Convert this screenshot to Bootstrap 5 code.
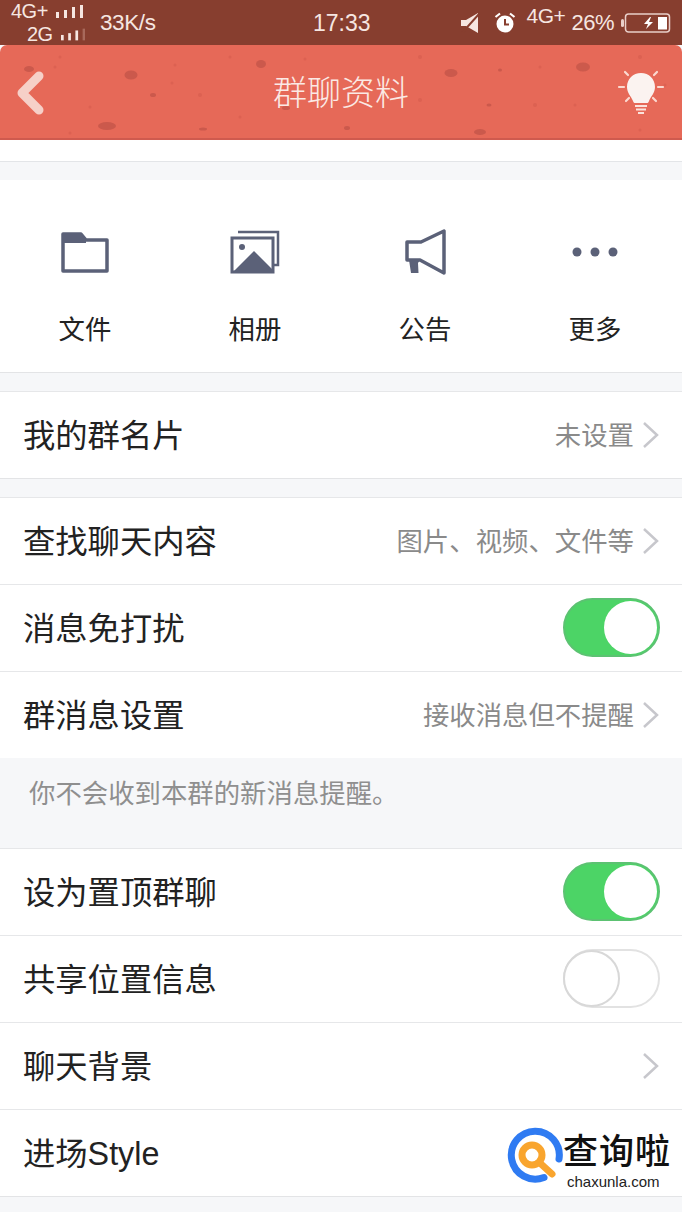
<!DOCTYPE html>
<html lang="zh-CN">
<head>
    <meta charset="UTF-8">
    <meta name="viewport" content="width=device-width, initial-scale=1.0">
    <title>群聊资料</title>
    <link href="https://cdn.jsdelivr.net/npm/bootstrap@5.3.3/dist/css/bootstrap.min.css" rel="stylesheet">
    <style>
        html, body { height: 100%; }
        body {
            width: 682px;
            height: 1212px;
            overflow: hidden;
            background: #f6f7f9;
            font-family: "Liberation Sans", "Noto Sans CJK SC", sans-serif;
            color: #222;
        }
        .status-bar {
            height: 45px;
            background: #873e2f;
            color: #f6e6e1;
            overflow: hidden;
        }
        .net-col { width: 74px; margin-left: 11px; line-height: 17px; font-size: 20px; letter-spacing: -.5px; }
        .net-line { height: 19px; }
        .net-speed { font-size: 22.500px; width: 60px; margin-left: 15px; letter-spacing: -.4px; }
        .clock { font-size: 23px; left: 313px; top: 9px; line-height: 28px; }
        .status-right { margin-right: 11px; font-size: 22px; }
        .status-mute { margin-right: 15px; }
        .status-alarm { margin-right: 10px; }
        .status-net { font-size: 21px; line-height: 20px; margin-bottom: 14px; margin-right: 6px; letter-spacing: -.4px; }
        .status-pct { letter-spacing: -.5px; margin-right: 7px; }
        .head-bar {
            height: 95px;
            background: #e66958;
            border-top-left-radius: 7px;
            border-top-right-radius: 7px;
            border-bottom: 2px solid #cf5a4e;
            color: #fbe9e5;
            overflow: hidden;
        }
        .head-spots { left: 0; top: 0; }
        .head-title { font-size: 34px; font-weight: 300; line-height: 1; margin-top: 3px; }
        .head-back { left: 15px; top: 25px; }
        .head-bulb { right: 17px; top: 25px; }
        .band-white { height: 22px; background: #fff; border-bottom: 1px solid #e3e5e8; }
        .gap-band { height: 18px; }
        .tool-grid { height: 193px; background: #fff; border-bottom: 1px solid #e3e4e6; }
        .tool-cell { width: 170px; }
        .tool-icon { height: 52px; margin-top: 46px; }
        .tool-label { font-size: 26.400px; line-height: 1; margin-top: 39px; color: #222; }
        .set-group { background: #fff; border-top: 1px solid #e6e7e9; }
        .set-group.is-last { border-bottom: 1px solid #e3e4e6; }
        .set-row {
            height: 87px;
            padding: 0 22px 0 23px;
            border-bottom: 1px solid #e6e7e9;
            font-size: 32.300px;
        }
        .set-row > span { padding-top: 3px; }
        .set-row:last-child { border-bottom: 0; height: 86px; }
        .set-value { font-size: 26.400px; color: #8a8a8a; }
        .row-arrow { margin-left: 8px; }
        .switch-pill {
            width: 97px;
            height: 59px;
            border-radius: 30px;
            background: #4cd466;
            border: 2px solid #5cc272;
            padding: 1px;
            margin-bottom: 2px;
        }
        .switch-pill.is-off {
            background: #fff;
            border-color: #e2e2e2;
            padding: 0;
        }
        .switch-knob {
            width: 53px;
            height: 53px;
            border-radius: 50%;
            background: #fff;
        }
        .switch-pill.is-off .switch-knob {
            width: 57px;
            height: 57px;
            margin: -1px 0 0 -2px;
            border: 2px solid #d8d8d8;
            flex: none;
        }
        .note-band {
            height: 90px;
            padding: 21px 0 0 29px;
            font-size: 26.400px;
            line-height: 30px;
            color: #8f8f8f;
        }
        .brand-logo { left: 504px; top: 1126px; }
        .brand-block { left: 563px; top: 1132px; }
        .brand-name { font-family: "Liberation Serif", "Noto Sans CJK SC", serif; font-size: 35px; font-weight: 500; line-height: 41px; color: #111; letter-spacing: 1px; }
        .brand-url { font-size: 15px; line-height: 17px; color: #222; margin-left: 4px; }
    </style>
</head>

<body class="position-relative">
    <!-- status bar -->
    <div class="status-bar d-flex align-items-center position-relative">
        <div class="net-col">
            <div class="net-line d-flex align-items-center">
                <span>4G+</span>
                <svg class="ms-2" width="27" height="13" viewBox="0 0 27 13"><g fill="#f6e6e1"><rect x="0" y="7" width="3" height="6"/><rect x="8" y="5" width="3" height="8"/><rect x="16" y="2" width="3" height="11"/><rect x="24" y="0" width="3" height="13"/></g></svg>
            </div>
            <div class="net-line d-flex align-items-center mt-1 ps-3">
                <span>2G</span>
                <svg class="ms-2" width="27" height="13" viewBox="0 0 27 13"><g fill="#f6e6e1"><rect x="0" y="7" width="3" height="6"/><rect x="8" y="5" width="3" height="8"/><rect x="16" y="2" width="3" height="11"/></g><rect x="24" y="0" width="3" height="13" fill="#a8695b"/></svg>
            </div>
        </div>
        <div class="net-speed">33K/s</div>
        <div class="clock position-absolute">17:33</div>
        <div class="status-right ms-auto d-flex align-items-center">
            <svg class="status-mute" width="18" height="20" viewBox="0 0 18 20"><path d="M0 7h5l12-7v20L5 13H0z" fill="#f6e6e1"/><path d="M1 20L18 1" stroke="#873e2f" stroke-width="2"/></svg>
            <svg class="status-alarm" width="22" height="22" viewBox="0 0 22 22"><circle cx="11" cy="12" r="8.500" fill="#fff"/><path d="M11 7v5.500h4" fill="none" stroke="#873e2f" stroke-width="2"/><path d="M1.500 5L6 1.500M20.500 5L16 1.500" stroke="#fff" stroke-width="2.200"/></svg>
            <span class="status-net">4G+</span>
            <span class="status-pct">26%</span>
            <svg width="50" height="20" viewBox="0 0 50 20"><rect x="0" y="6" width="3" height="8" rx="1.500" fill="#e9cfc9"/><rect x="4.500" y="1" width="44" height="18" rx="3" fill="none" stroke="#e9cfc9" stroke-width="1.500"/><path d="M29 4l-6 7h4l-2 5 7-7h-4l2-5z" fill="#fff"/><rect x="37" y="4" width="9" height="12.500" fill="#fff"/></svg>
        </div>
    </div>

    <!-- title bar -->
    <div class="head-bar position-relative d-flex align-items-center justify-content-center">
        <svg class="head-spots position-absolute" width="682" height="95" viewBox="0 0 682 95">
            <g fill="#c5564a" opacity=".8">
                <ellipse cx="29" cy="24" rx="5" ry="3"/><ellipse cx="131" cy="30" rx="6.500" ry="4.500"/>
                <ellipse cx="153" cy="50" rx="3" ry="2"/><ellipse cx="107" cy="81" rx="9" ry="4"/>
                <ellipse cx="203" cy="84" rx="4" ry="1.500"/><ellipse cx="261" cy="19" rx="5" ry="4"/>
                <ellipse cx="286" cy="63" rx="4" ry="2"/><ellipse cx="347" cy="83" rx="3" ry="2"/>
                <ellipse cx="451" cy="28" rx="6.500" ry="4"/><ellipse cx="500" cy="25" rx="2" ry="1.500"/>
                <ellipse cx="489" cy="60" rx="2.500" ry="1.500"/><ellipse cx="583" cy="22" rx="7" ry="4.500"/>
                <ellipse cx="480" cy="87" rx="6" ry="3"/>
            </g>
            <g fill="#d85f50" opacity=".7">
                <circle cx="60" cy="12" r="1.500"/><circle cx="55" cy="22" r="1.500"/><circle cx="90" cy="62" r="1.500"/>
                <circle cx="175" cy="20" r="1.500"/><circle cx="172" cy="38" r="1.500"/><circle cx="200" cy="50" r="2"/>
                <circle cx="230" cy="12" r="1.500"/><circle cx="240" cy="72" r="1.500"/><circle cx="305" cy="14" r="1.500"/>
                <circle cx="420" cy="12" r="2"/><circle cx="420" cy="55" r="2"/><circle cx="540" cy="22" r="1.500"/>
                <circle cx="535" cy="60" r="2"/><circle cx="575" cy="60" r="1.500"/><circle cx="640" cy="12" r="2"/>
                <circle cx="665" cy="40" r="1.500"/><circle cx="640" cy="85" r="1.500"/><circle cx="70" cy="88" r="1.500"/>
            </g>
        </svg>
        <svg class="head-back position-absolute" width="30" height="46" viewBox="0 0 30 46"><path d="M24 6L7 23l17 17" fill="none" stroke="#f6d0c8" stroke-width="9" stroke-linecap="round" stroke-linejoin="round"/></svg>
        <div class="head-title position-relative">群聊资料</div>
        <svg class="head-bulb position-absolute" width="48" height="46" viewBox="0 0 48 46">
            <path d="M24 3c-8 0-14 6-14 14 0 6 4 9 6 14 .5 1.500 1 2 2 2h12c1 0 1.500-.5 2-2 2-5 6-8 6-14 0-8-6-14-14-14z" fill="#fbf3f0"/>
            <path d="M18 36h12M19 39.500h10M21 43h6" stroke="#fbe3dc" stroke-width="2"/>
            <path d="M2 17h5M41 17h5M8 2l3 3M40 2l-3 3M9 31l3-3M39 31l-3-3" stroke="#fbd9d0" stroke-width="2.200" stroke-linecap="round"/>
        </svg>
    </div>

    <div class="band-white"></div>
    <div class="gap-band"></div>

    <!-- tools -->
    <div class="tool-grid d-flex">
        <div class="tool-cell d-flex flex-column align-items-center">
            <div class="tool-icon d-flex align-items-center">
                <svg width="48" height="42" viewBox="0 0 48 42"><path d="M2 3h18l5 6h21v31H2z" fill="#fff" stroke="#5b6178" stroke-width="3.500" stroke-linejoin="round"/><path d="M2 3h18l5 6v3H2z" fill="#5b6178"/></svg>
            </div>
            <div class="tool-label">文件</div>
        </div>
        <div class="tool-cell d-flex flex-column align-items-center">
            <div class="tool-icon d-flex align-items-center">
                <svg width="50" height="44" viewBox="0 0 50 44"><path d="M8 2h40v33h-5" fill="none" stroke="#5b6178" stroke-width="2.500"/><rect x="2" y="8" width="41" height="34" fill="#fff" stroke="#5b6178" stroke-width="3"/><path d="M4 41L24 21l20 20z" fill="#5b6178"/><circle cx="12" cy="17" r="3" fill="#5b6178"/></svg>
            </div>
            <div class="tool-label">相册</div>
        </div>
        <div class="tool-cell d-flex flex-column align-items-center">
            <div class="tool-icon d-flex align-items-center">
                <svg width="42" height="46" viewBox="0 0 42 46"><path d="M40 2v42L16 31H3V13h14z" fill="none" stroke="#5b6178" stroke-width="3.500" stroke-linejoin="round"/><path d="M5 31h11l-2 3 .5 10H7z" fill="#5b6178"/></svg>
            </div>
            <div class="tool-label">公告</div>
        </div>
        <div class="tool-cell d-flex flex-column align-items-center">
            <div class="tool-icon d-flex align-items-center">
                <svg width="46" height="10" viewBox="0 0 46 10"><g fill="#5b6178"><circle cx="5" cy="5" r="4.500"/><circle cx="23" cy="5" r="4.500"/><circle cx="41" cy="5" r="4.500"/></g></svg>
            </div>
            <div class="tool-label">更多</div>
        </div>
    </div>

    <div class="gap-band"></div>

    <div class="set-group is-last">
        <div class="set-row d-flex align-items-center">
            <span>我的群名片</span>
            <span class="set-value ms-auto">未设置</span>
            <svg class="row-arrow" width="18" height="28" viewBox="0 0 18 28"><path d="M2 2l13 12L2 26" fill="none" stroke="#c7c7cc" stroke-width="2.500"/></svg>
        </div>
    </div>

    <div class="gap-band"></div>

    <div class="set-group">
        <div class="set-row d-flex align-items-center">
            <span>查找聊天内容</span>
            <span class="set-value ms-auto">图片、视频、文件等</span>
            <svg class="row-arrow" width="18" height="28" viewBox="0 0 18 28"><path d="M2 2l13 12L2 26" fill="none" stroke="#c7c7cc" stroke-width="2.500"/></svg>
        </div>
        <div class="set-row d-flex align-items-center">
            <span>消息免打扰</span>
            <div class="switch-pill ms-auto d-flex justify-content-end"><div class="switch-knob"></div></div>
        </div>
        <div class="set-row d-flex align-items-center">
            <span>群消息设置</span>
            <span class="set-value ms-auto">接收消息但不提醒</span>
            <svg class="row-arrow" width="18" height="28" viewBox="0 0 18 28"><path d="M2 2l13 12L2 26" fill="none" stroke="#c7c7cc" stroke-width="2.500"/></svg>
        </div>
    </div>

    <div class="note-band">你不会收到本群的新消息提醒。</div>

    <div class="set-group is-last">
        <div class="set-row d-flex align-items-center">
            <span>设为置顶群聊</span>
            <div class="switch-pill ms-auto d-flex justify-content-end"><div class="switch-knob"></div></div>
        </div>
        <div class="set-row d-flex align-items-center">
            <span>共享位置信息</span>
            <div class="switch-pill is-off ms-auto d-flex"><div class="switch-knob"></div></div>
        </div>
        <div class="set-row d-flex align-items-center">
            <span>聊天背景</span>
            <svg class="row-arrow ms-auto" width="18" height="28" viewBox="0 0 18 28"><path d="M2 2l13 12L2 26" fill="none" stroke="#c7c7cc" stroke-width="2.500"/></svg>
        </div>
        <div class="set-row d-flex align-items-center">
            <span>进场Style</span>
        </div>
    </div>

    <!-- watermark -->
    <svg class="brand-logo position-absolute" width="60" height="60" viewBox="0 0 60 60">
        <path d="M40 51.500A24 24 0 1 1 55 33" fill="none" stroke="#2f7bf2" stroke-width="7" stroke-linecap="round"/>
        <circle cx="28" cy="29" r="10" fill="none" stroke="#f9a52e" stroke-width="7"/>
        <path d="M37 38l11 10" stroke="#f9a52e" stroke-width="7" stroke-linecap="round"/>
    </svg>
    <div class="brand-block position-absolute">
        <div class="brand-name">查询啦</div>
        <div class="brand-url">chaxunla.com</div>
    </div>

    <script src="https://cdn.jsdelivr.net/npm/bootstrap@5.3.3/dist/js/bootstrap.bundle.min.js"></script>
</body>
</html>
